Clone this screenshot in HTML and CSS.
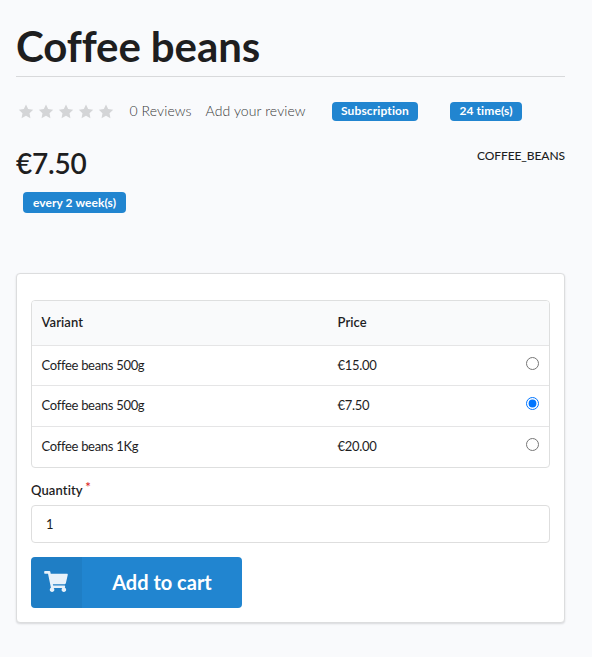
FILE: index.html
```html
<!DOCTYPE html>
<html lang="en">
<head>
<meta charset="utf-8">
<title>Coffee beans</title>
<link rel="stylesheet" href="styles.css">
</head>
<body>
<svg width="0" height="0" class="defs" aria-hidden="true">
  <symbol id="star" viewBox="0 0 576 512"><path d="M288 0L366 165 548 190 415 317 448 500 288 412 128 500 161 317 28 190 210 165z"/></symbol>
</svg>
<main class="product">
  <h1 class="title">Coffee beans</h1>
  <div class="meta">
    <div class="stars">
      <svg><use href="#star"/></svg><svg><use href="#star"/></svg><svg><use href="#star"/></svg><svg><use href="#star"/></svg><svg><use href="#star"/></svg>
    </div>
    <a class="reviews">0 Reviews</a>
    <a class="add-review">Add your review</a>
    <span class="label subscription">Subscription</span>
    <span class="label times">24 time(s)</span>
  </div>
  <div class="pricing">
    <div class="price">€7.50</div>
    <div class="code">COFFEE_BEANS</div>
  </div>
  <span class="label interval">every 2 week(s)</span>
  <form class="card">
    <div class="variants">
      <div class="row head"><span>Variant</span><span>Price</span><span></span></div>
      <div class="row"><span>Coffee beans 500g</span><span>€15.00</span><input type="radio" name="variant"></div>
      <div class="row"><span>Coffee beans 500g</span><span>€7.50</span><input type="radio" name="variant" checked></div>
      <div class="row last"><span>Coffee beans 1Kg</span><span>€20.00</span><input type="radio" name="variant"></div>
    </div>
    <label class="field-label" for="quantity">Quantity<span class="required">*</span></label>
    <input class="quantity" id="quantity" type="text" value="1">
    <button class="cart" type="button">
      <span class="cart-icon"><svg viewBox="0 0 576 512"><path d="M528.120 301.319l47.273-208C578.806 78.301 567.391 64 551.990 64H159.208l-9.166-44.810C147.758 8.021 137.930 0 126.529 0H24C10.745 0 0 10.745 0 24v16c0 13.255 10.745 24 24 24h69.883l70.248 343.435C147.325 417.100 136 435.222 136 456c0 30.928 25.072 56 56 56s56-25.072 56-56c0-15.674-6.447-29.835-16.824-40h209.647C430.447 426.165 424 440.326 424 456c0 30.928 25.072 56 56 56s56-25.072 56-56c0-22.172-12.888-41.332-31.579-50.405l5.517-24.276c3.413-15.018-8.002-29.319-23.403-29.319H218.117l-6.545-32h293.145c11.206 0 20.920-7.754 23.403-18.681z"/></svg></span>
      <span class="cart-text">Add to cart</span>
    </button>
  </form>
</main>
</body>
</html>
```
FILE: styles.css
```css
* { box-sizing: border-box; }
body {
  margin: 0;
  min-height: 657px;
  background: #f9fafc;
  color: #1e1e1f;
  font: 400 13px/18px Lato, "Liberation Sans", sans-serif;
  font-variant-ligatures: none;
}
.defs { display: block; height: 0; }
.product { width: 549px; margin-left: 16px; padding-top: 19px; }
.title {
  height: 58px;
  margin: 0;
  border-bottom: 1px solid #d8d9db;
  font-size: 42px;
  line-height: 55px;
  font-weight: 700;
  letter-spacing: -.1px;
}
.meta { display: flex; align-items: center; height: 20px; margin-top: 24px; color: #38393a; font-size: 14px; font-weight: 300; }
.stars { display: flex; gap: 4px; width: 113.500px; padding-left: 1.500px; }
.stars svg { width: 16px; height: 15px; fill: #d4d5d7; }
.reviews { letter-spacing: .1px; }
.add-review { margin-left: 14px; letter-spacing: .1px; }
.label {
  display: block;
  height: 19px;
  border-radius: 4px;
  background: #2185d0;
  color: #fff;
  font-size: 12px;
  line-height: 18px;
  font-weight: 700;
  text-align: center;
}
.subscription { width: 86px; margin-left: auto; letter-spacing: .12px; }
.times { width: 72px; margin: 0 43px 0 32px; letter-spacing: .1px; }
.pricing { display: flex; justify-content: space-between; height: 44px; margin-top: 27px; }
.price { font-size: 28px; line-height: 30px; font-weight: 600; letter-spacing: -.2px; }
.code { font-size: 12px; line-height: 16px; font-weight: 500; letter-spacing: -.08px; }
.interval { width: 103px; height: 21px; line-height: 21px; margin-left: 7px; letter-spacing: .08px; }
.card {
  height: 350px;
  margin-top: 60px;
  padding: 26px 14px 14px;
  border: 1px solid #dcddde;
  border-radius: 4px;
  background: #fff;
  box-shadow: 0 1px 2px rgba(34, 36, 38, .15);
}
.variants { border: 1px solid #dedfdf; border-radius: 4px; overflow: hidden; }
.row {
  display: grid;
  grid-template-columns: 296px 1fr 13px;
  height: 40px;
  padding: 0 10px 0 9.500px;
  border-top: 1px solid #e5e5e6;
  line-height: 38px;
  letter-spacing: -.3px;
}
.row.head { height: 44px; border-top: 0; background: #f9fafb; font-weight: 600; line-height: 42px; letter-spacing: .08px; }
.row:nth-child(3) { height: 41px; }
.row.last { height: 41px; }
.row input { width: 13px; height: 13px; margin: 11px 0 0; }
.field-label { display: block; height: 37px; padding-top: 13px; font-weight: 600; letter-spacing: .1px; }
.required { margin-left: 2.500px; color: #db2828; vertical-align: top; line-height: 12px; font-size: 13px; }
.quantity {
  display: block;
  width: 100%;
  height: 38px;
  padding: 0 14px;
  border: 1px solid #dedede;
  border-radius: 4px;
  color: inherit;
  font: inherit;
}
.cart {
  display: flex;
  width: 211px;
  height: 51px;
  margin-top: 14px;
  padding: 0;
  overflow: hidden;
  border: 0;
  border-radius: 4px;
  background: #2185d0;
  color: #fff;
  font: 700 20px/51px Lato, sans-serif;
}
.cart-icon { display: flex; align-items: center; justify-content: center; width: 51px; height: 51px; padding: 0 1px 2px 0; background: rgba(0, 0, 0, .05); }
.cart-icon svg { width: 24px; height: 21px; fill: #e8f2fa; }
.cart-text { flex: 1; }
```
